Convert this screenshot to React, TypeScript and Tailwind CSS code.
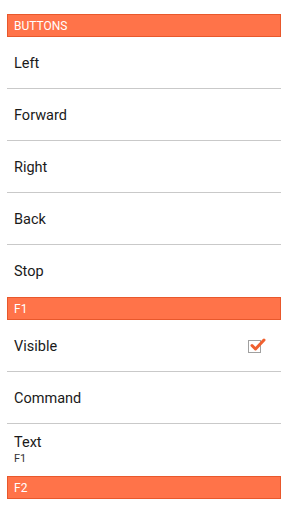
import React from "react";

const Header = ({ label }: { label: string }) => (
  <div className="mx-[7px] h-[23px] bg-[#ff7349] border border-[#e8582c] flex items-center px-[6px] text-white text-[12px] leading-none">
    {label}
  </div>
);

const Row = ({
  label,
  last,
  right,
}: {
  label: string;
  last?: boolean;
  right?: React.ReactNode;
}) => (
  <div
    className={`mx-[7px] h-[52px] flex items-center justify-between pl-[7px] pr-[20px] pt-[2px] text-[14.5px] text-[#1a1a1a] ${
      last ? "" : "border-b border-[#c9c9c9]"
    }`}
  >
    <span>{label}</span>
    {right}
  </div>
);

const Check = () => (
  <div className="relative w-[13px] h-[13px] border border-[#a0a0a0] bg-white">
    <svg
      className="absolute left-[1px] top-[-4px]"
      width="16"
      height="16"
      viewBox="0 0 16 16"
    >
      <path
        d="M2 8.5 L5.5 12 L14 3"
        fill="none"
        stroke="#f0602f"
        strokeWidth="3"
        strokeLinecap="round"
        strokeLinejoin="round"
      />
    </svg>
  </div>
);

export default function App() {
  return (
    <div
      className="w-[288px] h-[512px] bg-white overflow-hidden pt-[14px]"
      style={{ fontFamily: "Roboto, 'Noto Sans', sans-serif" }}
    >
      <Header label="BUTTONS" />
      <Row label="Left" />
      <Row label="Forward" />
      <Row label="Right" />
      <Row label="Back" />
      <Row label="Stop" last />
      <Header label="F1" />
      <Row label="Visible" right={<Check />} />
      <Row label="Command" />
      <div className="mx-[7px] h-[52px] flex flex-col justify-center pl-[7px] text-[#1a1a1a]">
        <span className="text-[14.5px] leading-[18px]">Text</span>
        <span className="text-[11px] leading-[14px] text-[#333]">F1</span>
      </div>
      <Header label="F2" />
    </div>
  );
}
